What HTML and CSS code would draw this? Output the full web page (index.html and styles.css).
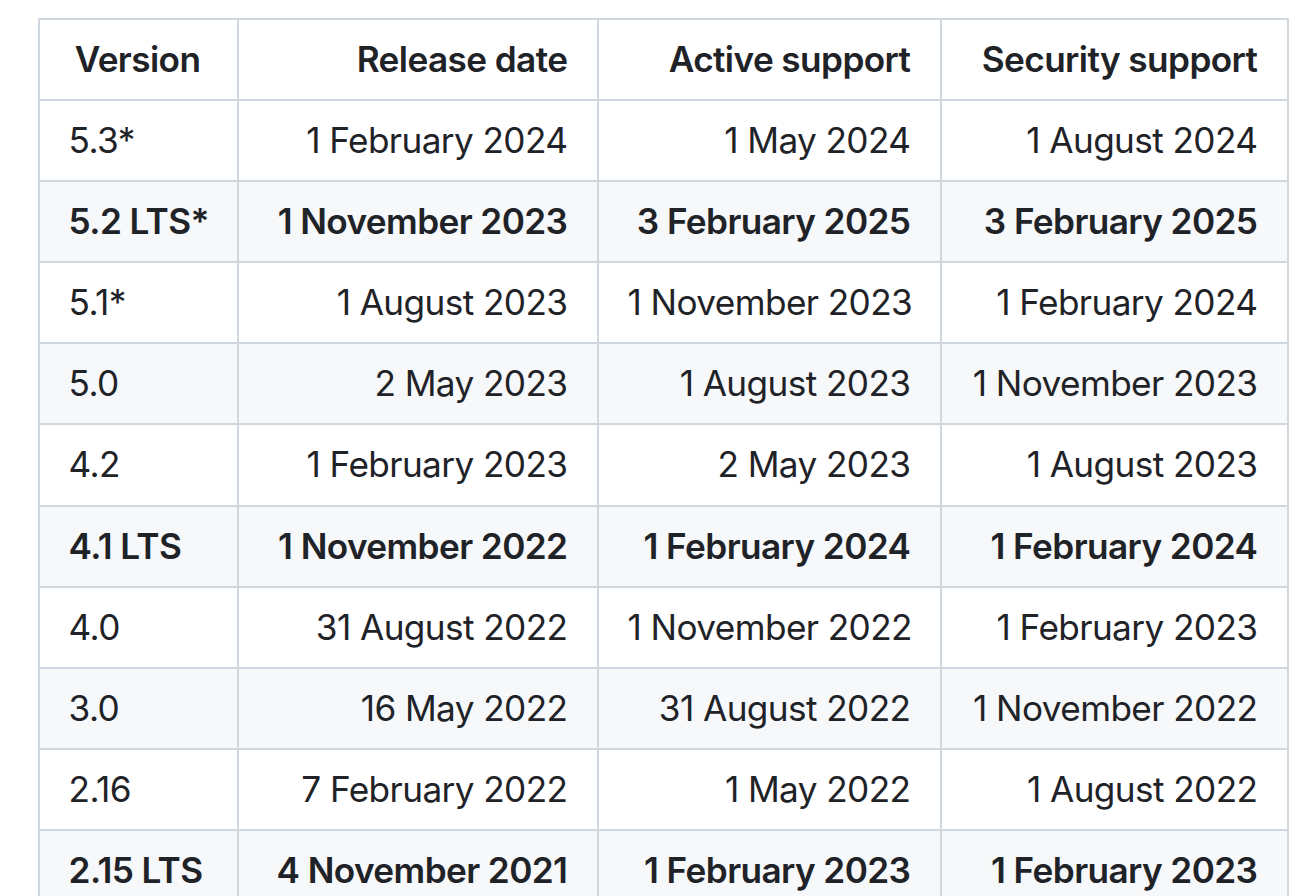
FILE: index.html
```html
<!DOCTYPE html>
<html lang="en">
<head>
<meta charset="utf-8">
<title>Release table</title>
<link rel="stylesheet" href="styles.css">
</head>
<body>
<div class="page">
<table class="releases">
  <colgroup>
    <col class="c1"><col class="c2"><col class="c3"><col class="c4">
  </colgroup>
  <thead>
    <tr><th class="center">Version</th><th>Release date</th><th>Active support</th><th>Security support</th></tr>
  </thead>
  <tbody>
    <tr><td>5.3*</td><td>1 February 2024</td><td>1 May 2024</td><td>1 August 2024</td></tr>
    <tr class="lts"><td>5.2 LTS*</td><td>1 November 2023</td><td>3 February 2025</td><td>3 February 2025</td></tr>
    <tr><td>5.1*</td><td>1 August 2023</td><td>1 November 2023</td><td>1 February 2024</td></tr>
    <tr><td>5.0</td><td>2 May 2023</td><td>1 August 2023</td><td>1 November 2023</td></tr>
    <tr><td>4.2</td><td>1 February 2023</td><td>2 May 2023</td><td>1 August 2023</td></tr>
    <tr class="lts"><td>4.1 LTS</td><td>1 November 2022</td><td>1 February 2024</td><td>1 February 2024</td></tr>
    <tr><td>4.0</td><td>31 August 2022</td><td>1 November 2022</td><td>1 February 2023</td></tr>
    <tr><td>3.0</td><td>16 May 2022</td><td>31 August 2022</td><td>1 November 2022</td></tr>
    <tr><td>2.16</td><td>7 February 2022</td><td>1 May 2022</td><td>1 August 2022</td></tr>
    <tr class="lts"><td>2.15 LTS</td><td>4 November 2021</td><td>1 February 2023</td><td>1 February 2023</td></tr>
  </tbody>
</table>
</div>
</body>
</html>
```
FILE: styles.css
```css
html, body {
  margin: 0;
  padding: 0;
  background: #ffffff;
}

.page {
  padding: 18px 0 0 38px;
  font-family: Inter, "Liberation Sans", sans-serif;
  color: #1f2328;
}

.releases {
  border-collapse: separate;
  border-spacing: 0;
  table-layout: fixed;
  width: 1251px;
  border-left: 2px solid #d0d7de;
  border-top: 2px solid #d0d7de;
  font-size: 35.2px;
  letter-spacing: -0.6px;
}

.releases .c1 { width: 199px; }
.releases .c2 { width: 360px; }
.releases .c3 { width: 343px; }
.releases .c4 { width: 347px; }

.releases th,
.releases td {
  box-sizing: border-box;
  padding: 13px 29.6px 13px 28.6px;
  line-height: 53.1px;
  border-right: 2px solid #d0d7de;
  border-bottom: 2px solid #d0d7de;
  text-align: right;
  white-space: nowrap;
  font-weight: 400;
}

.releases th {
  font-weight: 600;
}

.releases th.center {
  text-align: center;
  padding-left: 27.6px;
}

.releases td:first-child {
  text-align: left;
}

.releases tbody tr:nth-child(2n) {
  background: #f6f8fa;
}

.releases tr.lts td {
  font-weight: 600;
}
```
